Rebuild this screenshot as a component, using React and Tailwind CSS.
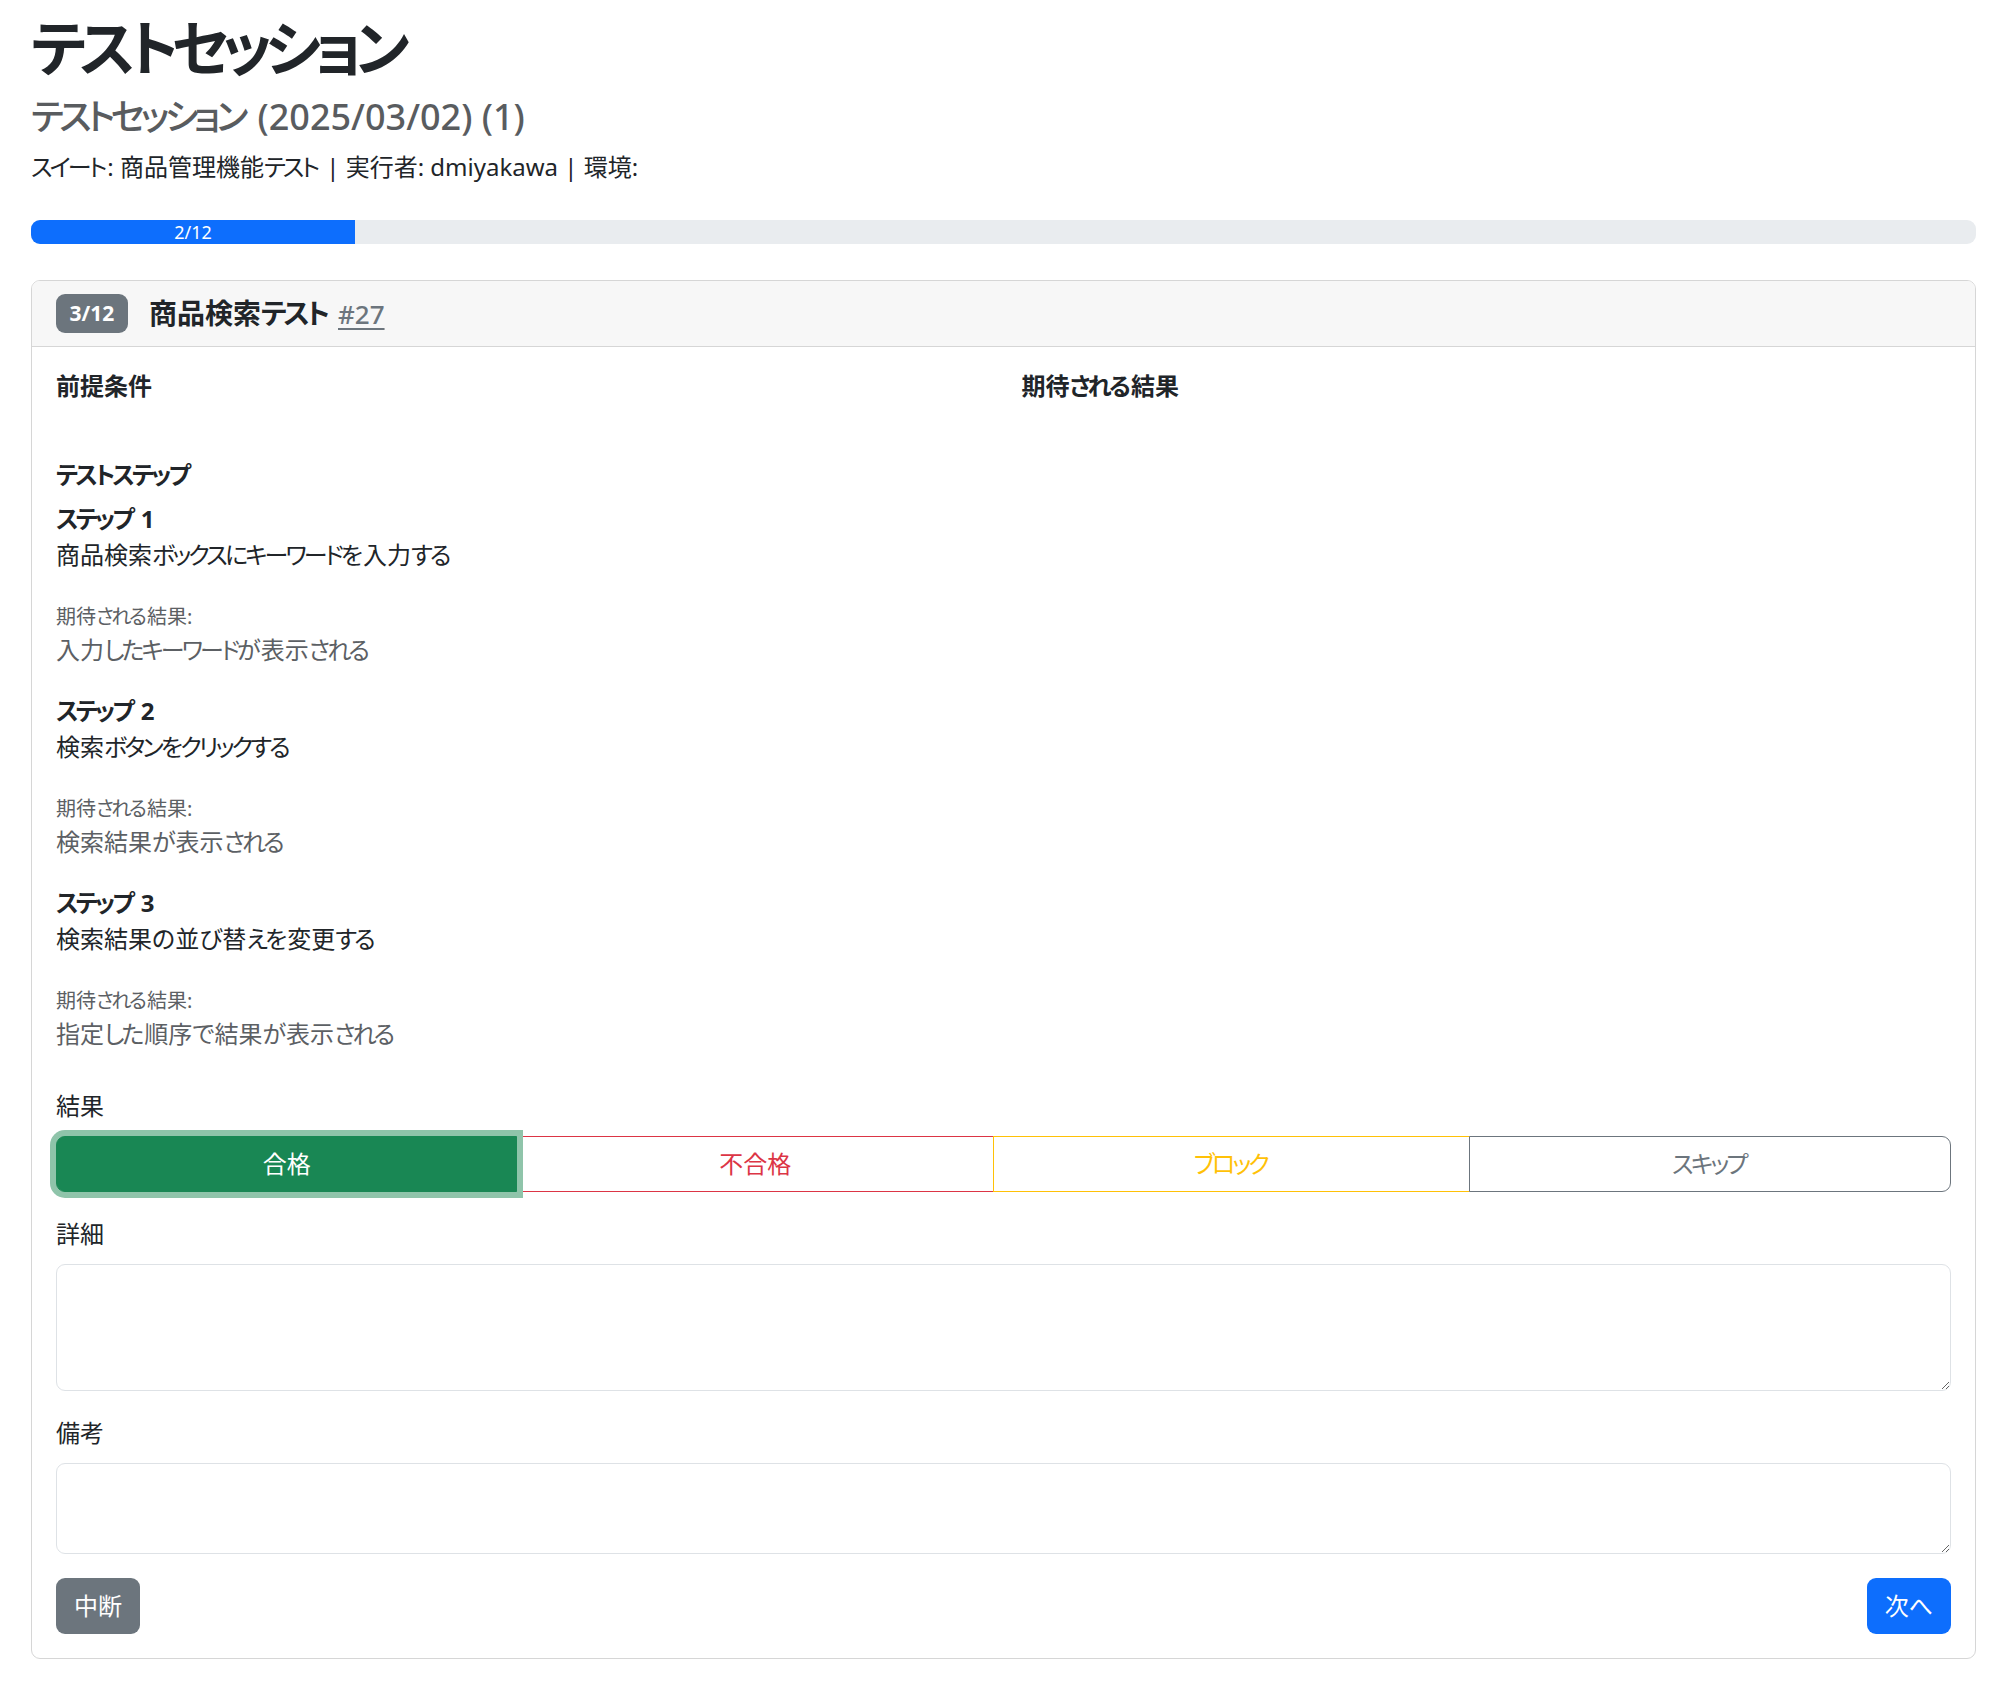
import React from "react";

const steps = [
  {
    no: 1,
    action: "商品検索ボックスにキーワードを入力する",
    expected: "入力したキーワードが表示される",
  },
  {
    no: 2,
    action: "検索ボタンをクリックする",
    expected: "検索結果が表示される",
  },
  {
    no: 3,
    action: "検索結果の並び替えを変更する",
    expected: "指定した順序で結果が表示される",
  },
];

const font = {
  fontFamily: '"Noto Sans", "Noto Sans CJK JP", sans-serif',
};

// kana in the reference font are narrow, so tighten the kana runs
// (the last kana of a run keeps its normal spacing)
const jp = (text) =>
  text.split(/([\u3040-\u30ff]+)/).map((part, i) =>
    /^[\u3040-\u30ff]+$/.test(part) ? (
      <React.Fragment key={i}>
        <span className="tracking-[-0.12em]">{part.slice(0, -1)}</span>
        {part.slice(-1)}
      </React.Fragment>
    ) : (
      part
    )
  );

const StepItem = ({ step }) => (
  <div className="mb-[25px]">
    <div className="text-[24px] leading-[36px] font-bold">{jp(`ステップ ${step.no}`)}</div>
    <p className="text-[24px] leading-[36px]">{jp(step.action)}</p>
    <div className="mt-[29px] text-[20px] leading-[30px] text-[#5c6064]">{jp("期待される結果:")}</div>
    <p className="text-[24px] leading-[36px] text-[#5c6064]">{jp(step.expected)}</p>
  </div>
);

const ResultButtons = () => (
  <div className="grid grid-cols-[461fr_476fr_476fr_480fr] w-full">
    <button className="relative z-10 h-[56px] rounded-l-[9px] bg-[#198754] border-[1.5px] border-[#198754] text-[24px] text-white ring-[6px] ring-[#8fc4aa]">
      合格
    </button>
    <button className="h-[56px] -ml-px bg-white border-[1.5px] border-[#dc3545] text-[24px] text-[#dc3545]">
      不合格
    </button>
    <button className="h-[56px] -ml-px bg-white border-[1.5px] border-[#ffc107] text-[24px] text-[#ffc107]">
      {jp("ブロック")}
    </button>
    <button className="h-[56px] -ml-px rounded-r-[9px] bg-white border-[1.5px] border-[#6c757d] text-[24px] text-[#6c757d]">
      {jp("スキップ")}
    </button>
  </div>
);

export default function App() {
  return (
    <div
      className="min-h-screen bg-white text-[#212529] px-[31px] pt-[12px] pb-[22px] [font-feature-settings:'palt']"
      style={font}
    >
      {/* Header */}
      <h1 className="text-[60px] leading-[72px] font-bold mb-[12px]">{jp("テストセッション")}</h1>
      <h4 className="text-[36px] leading-[41px] font-medium text-[#595c5f] mb-[12px]">
        {jp("テストセッション")} (2025/03/02) (1)
      </h4>
      <p className="text-[24px] leading-[36px] mb-[35px]">
        {jp("スイート: 商品管理機能テスト | 実行者: dmiyakawa | 環境:")}
      </p>

      {/* Progress */}
      <div className="h-[24px] w-full rounded-[9px] bg-[#e9ecef] overflow-hidden flex mb-[36px]">
        <div
          className="h-full bg-[#0d6efd] text-white text-[18px] leading-[24px] text-center"
          style={{ width: `${(2 / 12) * 100}%` }}
        >
          2/12
        </div>
      </div>

      {/* Card */}
      <div className="rounded-[9px] border-[1.5px] border-[#d6d6d6] overflow-hidden">
        <div className="h-[66px] px-[24px] flex items-center gap-[21px] bg-[#f7f7f7] border-b-[1.5px] border-[#d6d6d6]">
          <span className="h-[39px] w-[72px] rounded-[9px] bg-[#6c757d] text-white text-[21px] font-bold flex items-center justify-center">
            3/12
          </span>
          <h5 className="text-[28px] font-bold leading-[36px]">
            {jp("商品検索テスト")}
            <a href="#" className="ml-[8px] text-[#6c757d] font-medium underline underline-offset-[4px] text-[26px]">
              #27
            </a>
          </h5>
        </div>

        <div className="p-[24px]">
          <div className="grid grid-cols-2 gap-x-[36px]">
            <h6 className="text-[24px] leading-[29px] font-bold">前提条件</h6>
            <h6 className="text-[24px] leading-[29px] font-bold">{jp("期待される結果")}</h6>
          </div>

          <h6 className="mt-[60px] mb-[12px] text-[24px] leading-[29px] font-bold">{jp("テストステップ")}</h6>
          {steps.map((s) => (
            <StepItem key={s.no} step={s} />
          ))}

          <div className="mt-[36px]">
            <label className="block text-[24px] leading-[36px] mb-[12px]">結果</label>
            <ResultButtons />
          </div>

          <div className="mt-[24px]">
            <label className="block text-[24px] leading-[36px] mb-[12px]">詳細</label>
            <textarea className="block w-full h-[127px] rounded-[9px] border-[1.5px] border-[#dee2e6] px-[18px] py-[9px] text-[24px] outline-none" />
          </div>

          <div className="mt-[24px]">
            <label className="block text-[24px] leading-[36px] mb-[12px]">備考</label>
            <textarea className="block w-full h-[91px] rounded-[9px] border-[1.5px] border-[#dee2e6] px-[18px] py-[9px] text-[24px] outline-none" />
          </div>

          <div className="mt-[24px] flex justify-between">
            <button className="h-[56px] px-[18px] rounded-[9px] bg-[#6c757d] text-white text-[24px]">中断</button>
            <button className="h-[56px] px-[18px] rounded-[9px] bg-[#0d6efd] text-white text-[24px]">{jp("次へ")}</button>
          </div>
        </div>
      </div>
    </div>
  );
}
